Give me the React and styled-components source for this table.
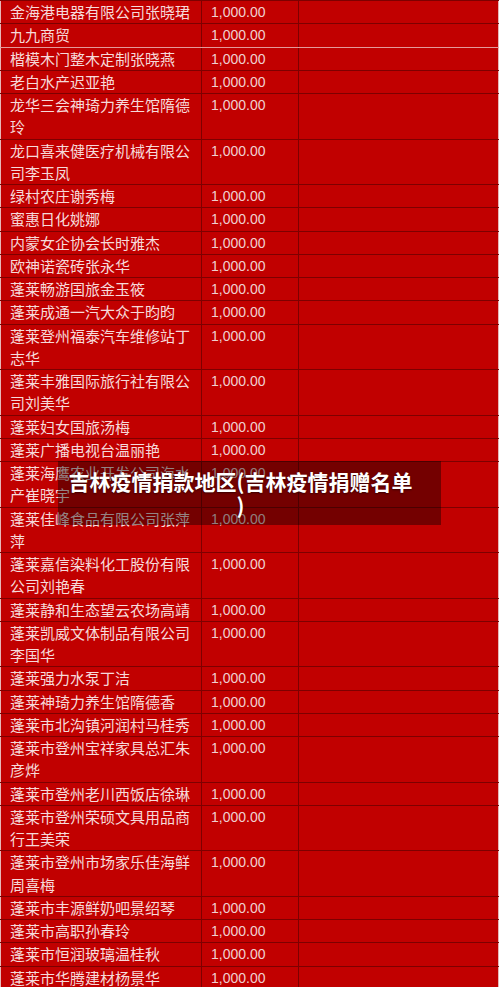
import React from "react";
import styled, { createGlobalStyle } from "styled-components";

const Global = createGlobalStyle`
  html, body { margin: 0; padding: 0; background: #ffffff; }
  body { font-family: "Noto Sans CJK SC", "Noto Sans", sans-serif; }
`;

const Page = styled.div`
  position: relative;
  width: 500px;
  height: 987px;
  overflow: hidden;
`;

const Table = styled.table`
  width: 499px;
  border-collapse: collapse;
  table-layout: fixed;
  background: #c10000;
  border: 1px solid #e7b7b7;
  border-top: 0;
`;

const Row = styled.tr``;

const Cell = styled.td`
  border: 1px solid #7d0000;
  border-bottom-color: ${(p) => (p.$light ? "#e49a9a" : "#7d0000")};
  padding: 0 8px 0 9px;
  line-height: 22.25px;
  vertical-align: top;
  color: #f6dada;
  font-size: 15px;
  font-family: "Noto Sans CJK SC", "Noto Sans", sans-serif;
  word-break: break-all;
  &:first-child { border-left: 0; }
  &:last-child { border-right: 0; }
`;

const Amount = styled(Cell)`
  font-family: "Liberation Sans", Arial, sans-serif;
  font-size: 14px;
  color: #efd0d0;
`;

const Overlay = styled.div`
  position: absolute;
  left: 58px;
  top: 461px;
  width: 383px;
  height: 64px;
  box-sizing: border-box;
  padding: 9px 28px 0 10px;
  background: rgba(0, 0, 0, 0.4);
`;

const Title = styled.h1`
  margin: 0;
  text-align: center;
  color: #ffffff;
  font-family: "Noto Sans CJK SC", "Noto Sans", sans-serif;
  font-weight: 700;
  font-size: 21px;
  line-height: 23.5px;
  text-shadow: 0 1px 2px rgba(0, 0, 0, 0.5);
  word-break: break-all;
  line-break: anywhere;
`;

const rows = [
  "金海港电器有限公司张晓珺",
  "九九商贸",
  "楷模木门整木定制张晓燕",
  "老白水产迟亚艳",
  "龙华三会神琦力养生馆隋德玲",
  "龙口喜来健医疗机械有限公司李玉凤",
  "绿村农庄谢秀梅",
  "蜜惠日化姚娜",
  "内蒙女企协会长时雅杰",
  "欧神诺瓷砖张永华",
  "蓬莱畅游国旅金玉筱",
  "蓬莱成通一汽大众于昀昀",
  "蓬莱登州福泰汽车维修站丁志华",
  "蓬莱丰雅国际旅行社有限公司刘美华",
  "蓬莱妇女国旅汤梅",
  "蓬莱广播电视台温丽艳",
  "蓬莱海鹰农业开发公司海水产崔晓宇",
  "蓬莱佳峰食品有限公司张萍萍",
  "蓬莱嘉信染料化工股份有限公司刘艳春",
  "蓬莱静和生态望云农场高靖",
  "蓬莱凯威文体制品有限公司李国华",
  "蓬莱强力水泵丁洁",
  "蓬莱神琦力养生馆隋德香",
  "蓬莱市北沟镇河润村马桂秀",
  "蓬莱市登州宝祥家具总汇朱彦烨",
  "蓬莱市登州老川西饭店徐琳",
  "蓬莱市登州荣硕文具用品商行王美荣",
  "蓬莱市登州市场家乐佳海鲜周喜梅",
  "蓬莱市丰源鲜奶吧景绍琴",
  "蓬莱市高职孙春玲",
  "蓬莱市恒润玻璃温桂秋",
  "蓬莱市华腾建材杨景华",
];

export default function App() {
  return (
    <Page>
      <Global />
      <Table>
        <colgroup>
          <col style={{ width: 201 }} />
          <col style={{ width: 97 }} />
          <col />
        </colgroup>
        <tbody>
          {rows.map((name, i) => (
            <Row key={i}>
              <Cell $light={i === 1}>{name}</Cell>
              <Amount $light={i === 1}>1,000.00</Amount>
              <Cell $light={i === 1}></Cell>
            </Row>
          ))}
        </tbody>
      </Table>
      <Overlay>
        <Title>吉林疫情捐款地区(吉林疫情捐赠名单)</Title>
      </Overlay>
    </Page>
  );
}
